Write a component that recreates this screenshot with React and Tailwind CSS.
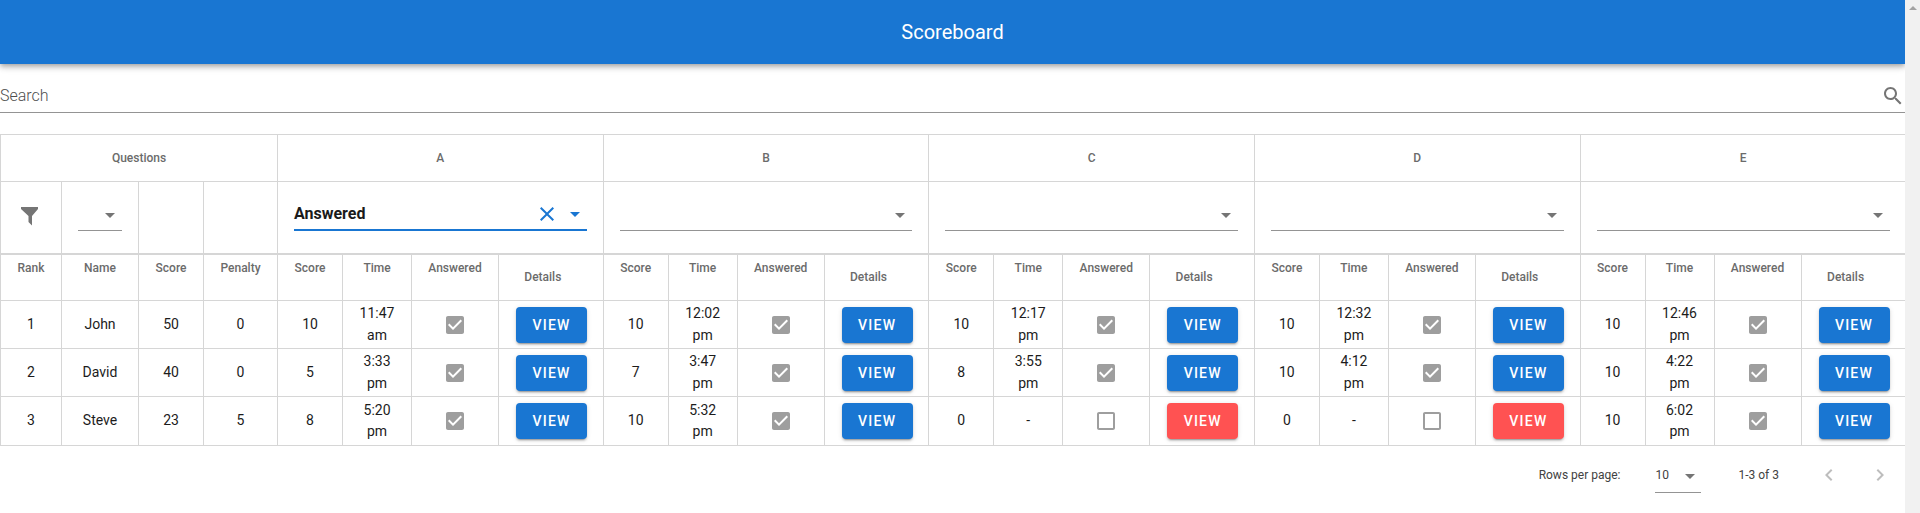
import React from 'react';

const cols = [61, 77, 65, 74];
const groupCols = [65, 69, 87, 104.6];
const groups = ['A', 'B', 'C', 'D', 'E'];

const rows = [
  {
    rank: 1, name: 'John', score: 50, penalty: 0, height: 'h-[48px]',
    answers: [
      { score: 10, time: '11:47 am', done: true },
      { score: 10, time: '12:02 pm', done: true },
      { score: 10, time: '12:17 pm', done: true },
      { score: 10, time: '12:32 pm', done: true },
      { score: 10, time: '12:46 pm', done: true },
    ],
  },
  {
    rank: 2, name: 'David', score: 40, penalty: 0, height: 'h-[48px]',
    answers: [
      { score: 5, time: '3:33 pm', done: true },
      { score: 7, time: '3:47 pm', done: true },
      { score: 8, time: '3:55 pm', done: true },
      { score: 10, time: '4:12 pm', done: true },
      { score: 10, time: '4:22 pm', done: true },
    ],
  },
  {
    rank: 3, name: 'Steve', score: 23, penalty: 5, height: 'h-[49px]',
    answers: [
      { score: 8, time: '5:20 pm', done: true },
      { score: 10, time: '5:32 pm', done: true },
      { score: 0, time: '-', done: false },
      { score: 0, time: '-', done: false },
      { score: 10, time: '6:02 pm', done: true },
    ],
  },
];

const Icon = ({ d, className }) => (
  <svg viewBox="0 0 24 24" fill="currentColor" className={className}>
    <path d={d} />
  </svg>
);

const ARROW = 'M7 10l5 5 5-5z';
const CLOSE = 'M19 6.41L17.59 5 12 10.59 6.41 5 5 6.41 10.59 12 5 17.59 6.41 19 12 13.41 17.59 19 19 17.59 13.41 12z';
const SEARCH = 'M15.5 14h-.79l-.28-.27C15.41 12.59 16 11.11 16 9.5 16 5.91 13.09 3 9.5 3S3 5.91 3 9.5 5.91 16 9.5 16c1.61 0 3.09-.59 4.23-1.57l.27.28v.79l5 4.99L20.49 19l-4.99-5zm-6 0C7.01 14 5 11.99 5 9.5S7.01 5 9.5 5 14 7.01 14 9.5 11.99 14 9.5 14z';
const CHECKED = 'M19 3H5c-1.11 0-2 .9-2 2v14c0 1.1.89 2 2 2h14c1.11 0 2-.9 2-2V5c0-1.1-.89-2-2-2zm-9 14l-5-5 1.41-1.41L10 14.17l7.59-7.59L19 8l-9 9z';
const UNCHECKED = 'M19 5v14H5V5h14m0-2H5c-1.1 0-2 .9-2 2v14c0 1.1.9 2 2 2h14c1.1 0 2-.9 2-2V5c0-1.1-.9-2-2-2z';
const PREV = 'M15.41 7.41L14 6l-6 6 6 6 1.41-1.41L10.83 12z';
const NEXT = 'M10 6L8.59 7.41 13.17 12l-4.58 4.59L10 18l6-6z';

const cellBorder = 'border border-[#d6d6d6] first:border-l last:border-r-0';
const headText = 'text-xs font-medium text-[#6b6b6b] text-center';

const HeadCell = ({ children, top = true }) => (
  <th className={`${cellBorder} ${headText} p-0 h-[47px] ${top ? 'align-top pt-[5px]' : 'align-middle pr-4'}`}>
    {children}
  </th>
);

const BodyCell = ({ children }) => (
  <td className={`${cellBorder} px-3 py-0 text-center text-sm leading-[21.5px] text-[#1c1c1c] align-middle`}>
    {children}
  </td>
);

const ColumnFilter = ({ value, active }) => (
  <td colSpan={4} className={`${cellBorder} border-b-2 px-4 p-0 align-top`}>
    <div className={`flex h-[30px] mt-[19px] items-center ${active ? 'border-b-2 border-[#1976d2]' : 'border-b border-[#949494]'}`}>
      <span className="flex-1 text-base font-bold text-[#1a1a1a] leading-none -mt-[2px]">{value}</span>
      {active && <Icon d={CLOSE} className="w-6 h-6 text-[#1976d2] mr-[4px] -mt-[2px]" />}
      <Icon d={ARROW} className={`w-6 h-6 -mt-[2px] ${active ? 'text-[#1976d2]' : 'text-[#757575]'}`} />
    </div>
  </td>
);

const App = () => {
  return (
    <div className="flex h-[513px] overflow-hidden bg-white font-['Roboto',sans-serif]">
      <div className="flex-1 min-w-0">
        <header className="h-16 flex items-center justify-center bg-[#1976d2] text-white text-xl shadow-[0_2px_4px_-1px_rgba(0,0,0,0.2),0_4px_5px_0_rgba(0,0,0,0.14),0_1px_10px_0_rgba(0,0,0,0.12)]">
          Scoreboard
        </header>

        <div className="flex items-center h-[33px] mt-[16px] border-b border-[#949494]">
          <span className="flex-1 text-base font-light text-[#4f4f4f]">Search</span>
          <Icon d={SEARCH} className="w-6 h-6 text-[#757575]" />
        </div>

        <table className="mt-[21px] w-[1905px] table-fixed border-collapse">
          <colgroup>
            {cols.map((w, i) => <col key={i} style={{ width: w }} />)}
            {groups.map(g => groupCols.map((w, i) => <col key={g + i} style={{ width: w }} />))}
          </colgroup>
          <thead>
            <tr>
              <th colSpan={4} className={`${cellBorder} ${headText} h-[47px] p-0`}>Questions</th>
              {groups.map(g => (
                <th key={g} colSpan={4} className={`${cellBorder} ${headText} h-[47px] p-0`}>{g}</th>
              ))}
            </tr>
            <tr className="h-[72px]">
              <td className={`${cellBorder} border-b-2 p-0 text-center`}>
                <svg viewBox="0 0 17 18.5" fill="currentColor" className="w-[17px] h-[18.5px] text-[#757575] inline-block mb-[3px] mr-[3px]">
                  <path d="M0 0H17V2L11 9V18.5L7.5 15V9L0 2Z" />
                </svg>
              </td>
              <td className={`${cellBorder} border-b-2 p-0 align-top`}>
                <div className="flex items-center justify-end h-[30px] w-11 mt-[19px] ml-4 border-b border-[#949494]">
                  <Icon d={ARROW} className="w-6 h-6 text-[#757575] -mt-[2px]" />
                </div>
              </td>
              <td className={`${cellBorder} border-b-2 p-0`} />
              <td className={`${cellBorder} border-b-2 p-0`} />
              {groups.map((g, i) => (
                <ColumnFilter key={g} value={i === 0 ? 'Answered' : ''} active={i === 0} />
              ))}
            </tr>
            <tr>
              <HeadCell>Rank</HeadCell>
              <HeadCell>Name</HeadCell>
              <HeadCell>Score</HeadCell>
              <HeadCell>Penalty</HeadCell>
              {groups.map(g => (
                <React.Fragment key={g}>
                  <HeadCell>Score</HeadCell>
                  <HeadCell>Time</HeadCell>
                  <HeadCell>Answered</HeadCell>
                  <HeadCell top={false}>Details</HeadCell>
                </React.Fragment>
              ))}
            </tr>
          </thead>
          <tbody>
            {rows.map(row => (
              <tr key={row.rank} className={row.height}>
                <BodyCell>{row.rank}</BodyCell>
                <BodyCell>{row.name}</BodyCell>
                <BodyCell>{row.score}</BodyCell>
                <BodyCell>{row.penalty}</BodyCell>
                {row.answers.map((a, i) => (
                  <React.Fragment key={i}>
                    <BodyCell>{a.score}</BodyCell>
                    <BodyCell>{a.time}</BodyCell>
                    <td className={`${cellBorder} p-0 text-center align-middle`}>
                      <Icon d={a.done ? CHECKED : UNCHECKED} className="w-6 h-6 text-[#9e9e9e] inline-block" />
                    </td>
                    <td className={`${cellBorder} p-0 align-middle`}>
                      <button className={`flex items-center justify-center w-[71px] h-9 ml-[17px] rounded text-sm font-medium uppercase tracking-[0.089em] text-white shadow-[0_3px_1px_-2px_rgba(0,0,0,0.2),0_2px_2px_0_rgba(0,0,0,0.14),0_1px_5px_0_rgba(0,0,0,0.12)] ${a.done ? 'bg-[#1976d2]' : 'bg-[#ff5252]'}`}>
                        View
                      </button>
                    </td>
                  </React.Fragment>
                ))}
              </tr>
            ))}
          </tbody>
        </table>

        <div className="flex items-start justify-end h-[52px] pt-[17px] text-xs text-[#424242]">
          <span className="leading-6">Rows per page:</span>
          <div className="flex items-center w-[46px] h-[30px] ml-[35px] border-b border-[#949494]">
            <span className="flex-1 text-xs -mt-[5px]">10</span>
            <Icon d={ARROW} className="w-6 h-6 text-[#757575] -mr-[1px] -mt-[4px]" />
          </div>
          <span className="ml-[37px] leading-6">1-3 of 3</span>
          <Icon d={PREV} className="w-6 h-6 text-[#bdbdbd] ml-[38px]" />
          <Icon d={NEXT} className="w-6 h-6 text-[#bdbdbd] ml-[27px] mr-[13px]" />
        </div>
      </div>

      {/* scrollbar */}
      <div className="w-[15px] shrink-0 bg-[#f1f1f1] flex justify-center pt-[6px]">
        <div className="w-0 h-0 border-x-[4px] border-x-transparent border-b-[4px] border-b-[#a3a3a3]" />
      </div>
    </div>
  );
};

export default App;
